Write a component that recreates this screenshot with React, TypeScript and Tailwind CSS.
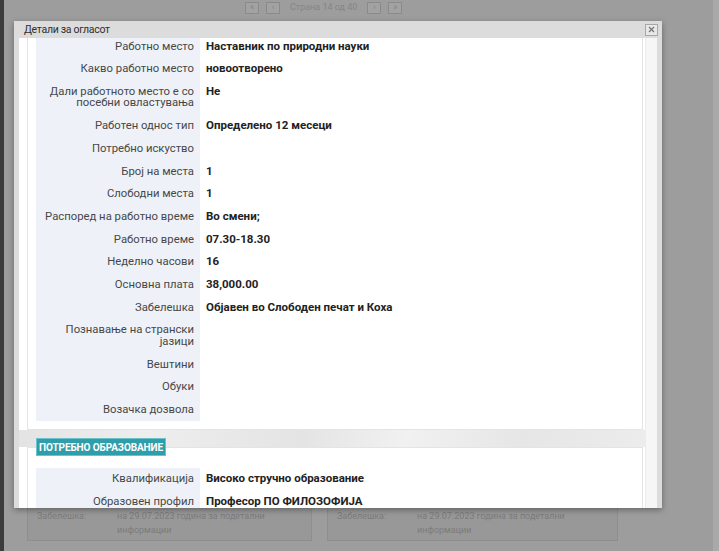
const rows1: [string, string][] = [
  ["Работно место", "Наставник по природни науки"],
  ["Какво работно место", "новоотворено"],
  ["Дали работното место е со посебни овластувања", "Не"],
  ["Работен однос тип", "Определено 12 месеци"],
  ["Потребно искуство", ""],
  ["Број на места", "1"],
  ["Слободни места", "1"],
  ["Распоред на работно време", "Во смени;"],
  ["Работно време", "07.30-18.30"],
  ["Неделно часови", "16"],
  ["Основна плата", "38,000.00"],
  ["Забелешка", "Објавен во Слободен печат и Коха"],
  ["Познавање на странски јазици", ""],
  ["Вештини", ""],
  ["Обуки", ""],
  ["Возачка дозвола", ""],
]

const rows2: [string, string][] = [
  ["Квалификација", "Високо стручно образование"],
  ["Образовен профил", "Професор ПО ФИЛОЗОФИЈА"],
]

const DetailRows = ({ rows }: { rows: [string, string][] }) => (
  <div className="grid grid-cols-[164px_1fr]">
    {rows.map(([label, value]) => (
      <div key={label} className="contents">
        <div className="bg-[#eef2f8] pr-[6px] pl-[4px] py-[5.6px] text-right text-[11.3px] leading-[11.5px] text-[#474747]">
          {label}
        </div>
        <div className="pl-[6px] py-[5.6px] text-[11.5px] leading-[11.5px] font-bold text-[#222]">
          {value}
        </div>
      </div>
    ))}
  </div>
)

const BgCard = ({ left }: { left: boolean }) => (
  <div className={`${left ? "w-[285px]" : "w-[291px]"} h-[38px] border border-[#8e8e8e] border-t-0 bg-[#989898] px-[9px] pt-[6px] flex text-[9px] leading-[14px] text-[#7b7b7b]`}>
    <div className="w-[80px] shrink-0">Забелешка:</div>
    <div className="flex-1 whitespace-nowrap">
      <div>на 29.07.2023 година за подетални</div>
      <div>информации</div>
    </div>
  </div>
)

export default function App() {
  return (
    <div className="relative w-[719px] h-[551px] overflow-hidden bg-[#9d9d9d] font-['Roboto',sans-serif] flex flex-col">
      {/* page behind the overlay */}
      <div className="absolute left-0 top-0 h-full w-[4px] bg-[#3c3c3c]" />
      <div className="absolute right-0 top-0 h-full w-[6px] bg-[#a9a9a9]" />

      <div className="flex items-center gap-[7px] pl-[245px] pt-[1px] h-[14px] text-[9px] text-[#858585]">
        <span className="w-[14px] h-[12px] border border-[#8a8a8a] bg-[#a2a2a2] flex items-center justify-center leading-none">«</span>
        <span className="w-[14px] h-[12px] border border-[#8a8a8a] bg-[#a2a2a2] flex items-center justify-center leading-none">‹</span>
        <span className="px-[3px]">Страна 14 од 40</span>
        <span className="w-[14px] h-[12px] border border-[#8a8a8a] bg-[#a2a2a2] flex items-center justify-center leading-none">›</span>
        <span className="w-[14px] h-[12px] border border-[#8a8a8a] bg-[#a2a2a2] flex items-center justify-center leading-none">»</span>
      </div>

      <div className="mt-auto mb-[10px] flex gap-[15px] pl-[27px]">
        <BgCard left />
        <BgCard left={false} />
      </div>

      {/* dialog */}
      <div className="absolute left-[14px] top-[21px] w-[648px] h-[487px] bg-[#dcdcdc] shadow-[0_2px_6px_rgba(0,0,0,0.35)] flex flex-col">
        <div className="h-[17px] flex items-center justify-between pl-[10px] pr-[4px]">
          <span className="text-[10.5px] text-[#2e2e2e] tracking-[-0.3px]">Детали за огласот</span>
          <span className="w-[13px] h-[12px] border border-[#a8a8a8] bg-[#e8e8e8] flex items-center justify-center">
            <svg width="7" height="7" viewBox="0 0 7 7">
              <path d="M1 1L6 6M6 1L1 6" stroke="#777" strokeWidth="1.3" />
            </svg>
          </span>
        </div>
        <div className="flex-1 flex mx-[5px] overflow-hidden bg-white">
          <div className="flex-1 overflow-hidden">
            <div className="-mt-[12px]">
              <div className="ml-[8px] mr-[2px] border border-[#e4e4e4] p-[8px] pr-0">
                <DetailRows rows={rows1} />
              </div>
              <div className="h-[17px] bg-[linear-gradient(100deg,#e3e3e3,#eeeeee_20%,#e4e4e4_45%,#f1f1f1_62%,#e6e6e6_80%,#ececec)]" />
              <div className="ml-[8px] mr-[2px] border border-[#e4e4e4] px-[8px] pb-[10px]">
                <div className="-mt-[10px] w-[130px] h-[18px] bg-[#2e9eab] border border-[#6cc1ca] flex items-center justify-center text-[10px] font-bold text-white tracking-[-0.1px]">
                  ПОТРЕБНО ОБРАЗОВАНИЕ
                </div>
                <div className="mt-[11.6px]">
                  <DetailRows rows={rows2} />
                </div>
              </div>
            </div>
          </div>
          <div className="w-[12px] bg-[#f6f6f6] border-l border-[#ececec]" />
        </div>
      </div>
    </div>
  )
}
